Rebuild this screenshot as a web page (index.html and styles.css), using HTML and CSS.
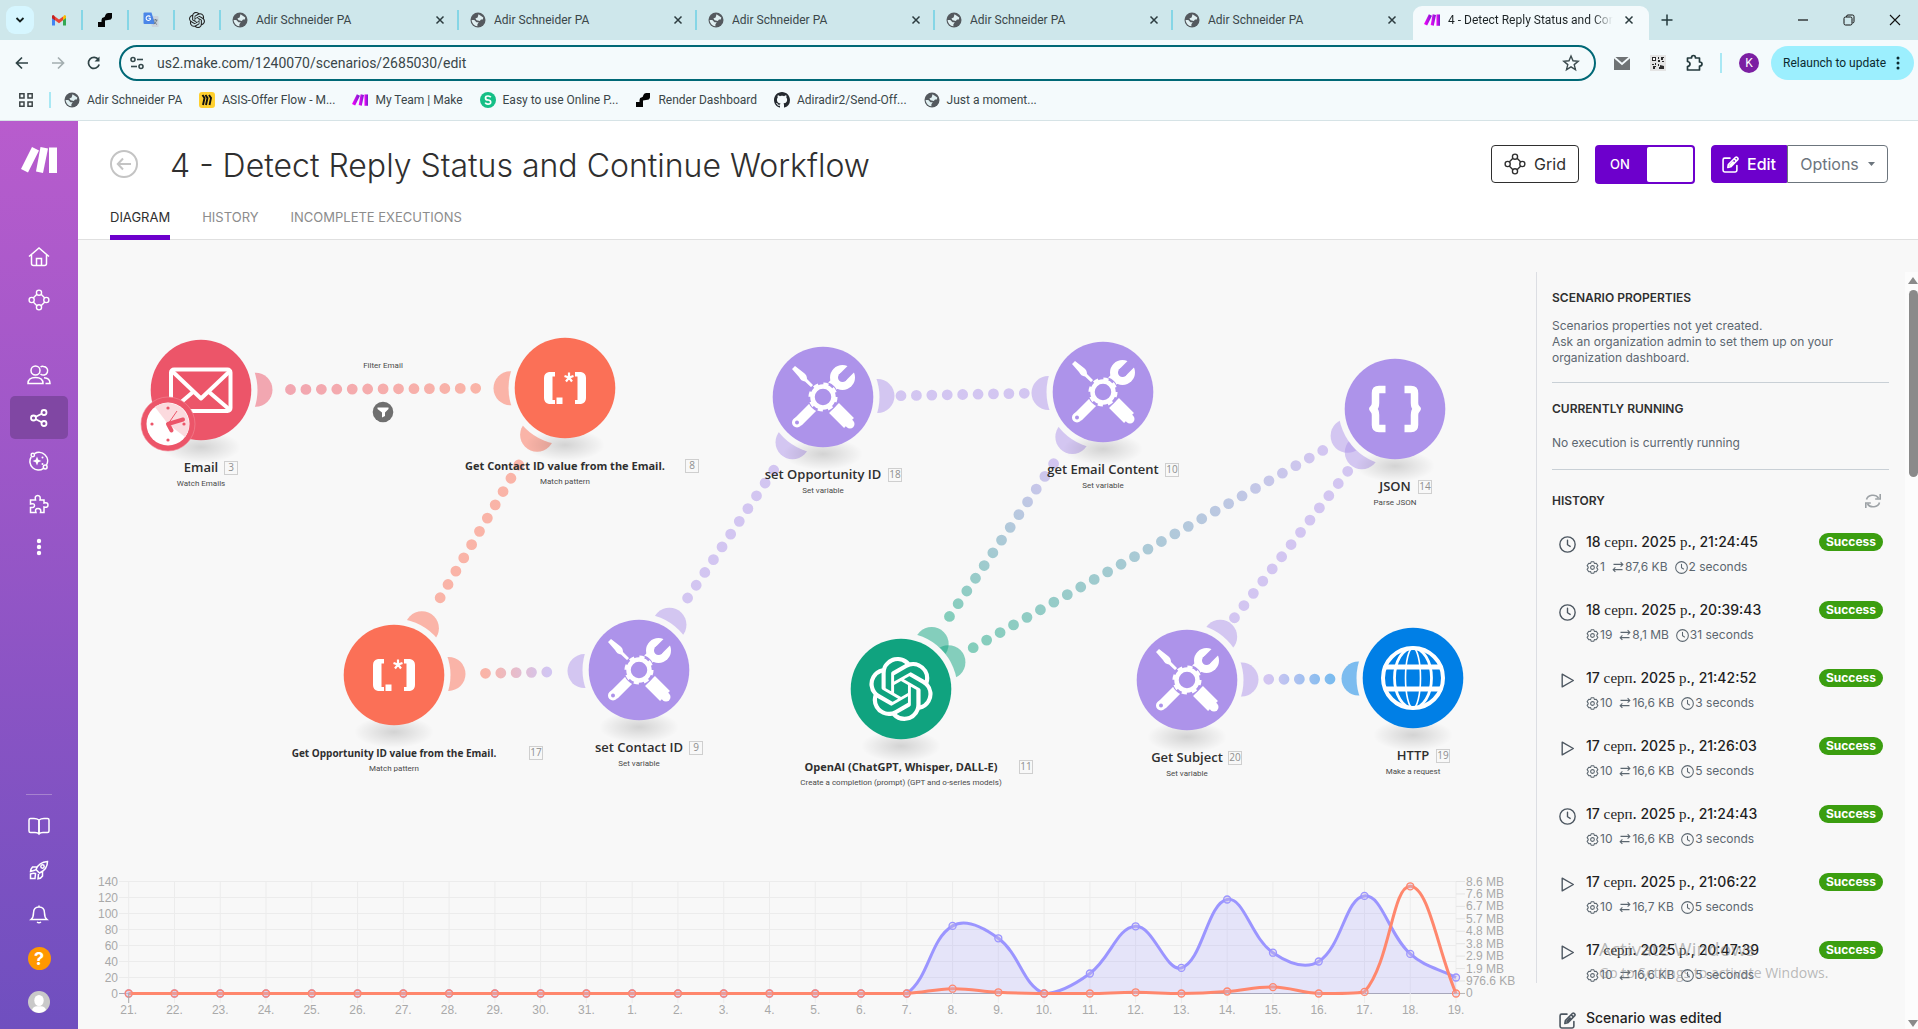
FILE: index.html
```html
<!DOCTYPE html>
<html lang="en">
<head>
<meta charset="utf-8">
<title>4 - Detect Reply Status and Continue Workflow</title>
<link rel="stylesheet" href="styles.css">
</head>
<body>
<svg class="defs" width="0" height="0" aria-hidden="true">
  <defs>
    <symbol id="i-globe" viewBox="0 0 16 16"><circle cx="8" cy="8" r="7.5" fill="#54595e"/><path d="M8.500 2.200 13.300 5.600 12.800 7.400H11L9.800 9 6.600 8.300 5.400 6.500 7.600 5.500Z" fill="#dfeff1"/><path d="M1.600 8H4.300L6.500 10.200H8.800L7.400 12.200V14.200A6.400 6.400 0 0 1 1.600 8Z" fill="#dfeff1"/></symbol>
    <symbol id="i-x" viewBox="0 0 16 16"><path d="m4.500 4.500 7 7m0-7-7 7" stroke="currentColor" stroke-width="1.500" fill="none"/></symbol>
    <symbol id="i-make" viewBox="0 0 36 26"><path d="M11 0 18 3.500 7 25.500 0 22Z"/><path d="M19.500 0 27 1.500 22 26 15 24.500Z"/><path d="M28 0.500H36V26H28Z"/></symbol>
    <symbol id="i-openai" viewBox="0 0 24 24"><path fill="currentColor" d="M22.2819 9.8211a5.9847 5.9847 0 0 0-.5157-4.9108 6.0462 6.0462 0 0 0-6.5098-2.9A6.0651 6.0651 0 0 0 4.9807 4.1818a5.9847 5.9847 0 0 0-3.9977 2.9 6.0462 6.0462 0 0 0 .7427 7.0966 5.98 5.98 0 0 0 .511 4.9107 6.051 6.051 0 0 0 6.5146 2.9001A5.9847 5.9847 0 0 0 13.2599 24a6.0557 6.0557 0 0 0 5.7718-4.2058 5.9894 5.9894 0 0 0 3.9977-2.9001 6.0557 6.0557 0 0 0-.7475-7.0729zm-9.022 12.6081a4.4755 4.4755 0 0 1-2.8764-1.0408l.1419-.0804 4.7783-2.7582a.7948.7948 0 0 0 .3927-.6813v-6.7369l2.02 1.1686a.071.071 0 0 1 .038.052v5.5826a4.504 4.504 0 0 1-4.4945 4.4944zm-9.6607-4.1254a4.4708 4.4708 0 0 1-.5346-3.0137l.142.0852 4.783 2.7582a.7712.7712 0 0 0 .7806 0l5.8428-3.3685v2.3324a.0804.0804 0 0 1-.0332.0615L9.74 19.9502a4.4992 4.4992 0 0 1-6.1408-1.6464zM2.3408 7.8956a4.485 4.485 0 0 1 2.3655-1.9728V11.6a.7664.7664 0 0 0 .3879.6765l5.8144 3.3543-2.0201 1.1685a.0757.0757 0 0 1-.071 0l-4.8303-2.7865A4.504 4.504 0 0 1 2.3408 7.872zm16.5963 3.8558L13.1038 8.364 15.1192 7.2a.0757.0757 0 0 1 .071 0l4.8303 2.7913a4.4944 4.4944 0 0 1-.6765 8.1042v-5.6772a.79.79 0 0 0-.407-.667zm2.0107-3.0231l-.142-.0852-4.7735-2.7818a.7759.7759 0 0 0-.7854 0L9.409 9.2297V6.8974a.0662.0662 0 0 1 .0284-.0615l4.8303-2.7866a4.4992 4.4992 0 0 1 6.6802 4.66zM8.3065 12.863l-2.02-1.1638a.0804.0804 0 0 1-.038-.0567V6.0742a4.4992 4.4992 0 0 1 7.3757-3.4537l-.142.0805L8.704 5.459a.7948.7948 0 0 0-.3927.6813zm1.0976-2.3654l2.602-1.4998 2.6069 1.4998v2.9994l-2.5974 1.4997-2.6067-1.4997Z"/></symbol>
    <symbol id="i-render" viewBox="0 0 16 16"><path fill="#050505" d="M11 1H15V5.500Q14.500 8 11 8L8 8.500V15H1V10H4.500V8Q4.500 5.500 7 5.200 8 5 8.200 3.500 8.700 1 11 1Z"/></symbol>
    <symbol id="i-flow" viewBox="0 0 24 24"><g fill="none" stroke="currentColor" stroke-width="1.500"><circle cx="12" cy="4" r="2.800"/><circle cx="12" cy="20" r="2.800"/><circle cx="4" cy="12" r="2.800"/><circle cx="20" cy="12" r="2.800"/><path d="M9.700 5.700 5.700 9.700M14.300 5.700 18.300 9.700M5.700 14.300 9.700 18.300M18.300 14.300 14.300 18.300"/></g></symbol>
    <symbol id="i-clock" viewBox="0 0 16 16"><g fill="none" stroke="currentColor" stroke-width="1.300" stroke-linecap="round"><circle cx="8" cy="8" r="7.200"/><path d="M8 4V8.200L10.500 9.800"/></g></symbol>
    <symbol id="i-play" viewBox="0 0 16 16"><path d="M3 2 13.500 8 3 14Z" fill="none" stroke="currentColor" stroke-width="1.300" stroke-linejoin="round"/></symbol>
    <symbol id="i-edit" viewBox="0 0 16 16"><g fill="none" stroke="currentColor" stroke-width="1.500" stroke-linejoin="round" stroke-linecap="round"><path d="M7.500 2H2.500Q1 2 1 3.500V13.500Q1 15 2.500 15H12.500Q14 15 14 13.500V9"/><path d="M5.500 10.800 6 8 12.800 1.200Q13.500.7 14.200 1.300L14.900 2Q15.400 2.700 14.800 3.400L8.200 10.200ZM11.500 2.700 13.500 4.600M7.500 8.800 10.500 5.800"/></g></symbol>
    <symbol id="i-gear" viewBox="0 0 16 16"><g fill="none" stroke="currentColor" stroke-width="1.300" stroke-linejoin="round"><path d="M6.300 1H9.700L10.300 3 12.600 2.700 14.600 5.700 13.300 7.500V8.500L14.600 10.300 12.600 13.300 10.300 13 9.700 15H6.300L5.700 13 3.400 13.300 1.400 10.300 2.700 8.500V7.500L1.400 5.700 3.400 2.700 5.700 3Z"/><circle cx="8" cy="8" r="2.300"/></g></symbol>
    <symbol id="i-swap" viewBox="0 0 16 16"><path d="M2 4.500H14.500M11.500 1.500 14.500 4.500 11.500 7.500M14 11.500H1.500M4.500 8.500 1.500 11.500 4.500 14.500" fill="none" stroke="currentColor" stroke-width="1.400"/></symbol>
  </defs>
</svg>

<div class="browser">
  <div class="tabstrip">
    <button class="tab-search" aria-label="Search tabs"><svg width="10" height="10" viewBox="0 0 10 10"><path d="M1.500 3 5 6.500 8.500 3" fill="none" stroke="#14201f" stroke-width="1.800"/></svg></button>
    <button class="pin" aria-label="Gmail"><svg width="16" height="16" viewBox="0 0 16 16"><path d="M1 3.500V13.500H4V7Z" fill="#4285f4"/><path d="M15 3.500V13.500H12V7Z" fill="#34a853"/><path d="M1 3.500 4 5V8.200L1 6Z" fill="#c5221f"/><path d="M4 8.200V4.500L8 7.500 12 4.500V8.200L8 11.200Z" fill="#ea4335"/><path d="M12 4.500 13.500 3Q15 3 15 4.500V6L12 8.200Z" fill="#fbbc04"/><path d="M4 4.500 2.500 3Q1 3 1 4.500V6L4 8.200Z" fill="#c5221f"/></svg></button>
    <button class="pin" aria-label="Render"><svg width="16" height="16"><use href="#i-render"/></svg></button>
    <button class="pin" aria-label="Translate"><svg width="16" height="16" viewBox="0 0 16 16"><path d="M6 4H14.500Q15.500 4 15.500 5V15H9Z" fill="#c9d3dc"/><path d="M1.500.5H8.500L12 12H1.500Q.5 12 .5 11V1.500Q.5.500 1.500.500Z" fill="#4a86e8"/><path d="M7.300 4.800A2.300 2.300 0 1 0 7.300 7.500V6.200H5.500" fill="none" stroke="#fff" stroke-width="1.100"/><path d="M10.500 8H14.500M12.500 7V8M13.800 8Q13 11 10.800 12.200M11.300 9.500Q12 11.500 14 12.500" fill="none" stroke="#6b7780" stroke-width=".9"/></svg></button>
    <button class="pin" aria-label="ChatGPT"><svg width="16" height="16"><use href="#i-openai"/></svg></button>
    <button class="tab"><svg width="16" height="16"><use href="#i-globe"/></svg><span class="tab-title">Adir Schneider PA</span><svg class="tab-x" width="16" height="16"><use href="#i-x"/></svg></button>
    <button class="tab"><svg width="16" height="16"><use href="#i-globe"/></svg><span class="tab-title">Adir Schneider PA</span><svg class="tab-x" width="16" height="16"><use href="#i-x"/></svg></button>
    <button class="tab"><svg width="16" height="16"><use href="#i-globe"/></svg><span class="tab-title">Adir Schneider PA</span><svg class="tab-x" width="16" height="16"><use href="#i-x"/></svg></button>
    <button class="tab"><svg width="16" height="16"><use href="#i-globe"/></svg><span class="tab-title">Adir Schneider PA</span><svg class="tab-x" width="16" height="16"><use href="#i-x"/></svg></button>
    <button class="tab last"><svg width="16" height="16"><use href="#i-globe"/></svg><span class="tab-title">Adir Schneider PA</span><svg class="tab-x" width="16" height="16"><use href="#i-x"/></svg></button>
    <button class="tab active"><svg width="16" height="12" fill="url(#mk)"><defs><linearGradient id="mk"><stop offset="0" stop-color="#ff00ff"/><stop offset="1" stop-color="#6e21c9"/></linearGradient></defs><use href="#i-make"/></svg><span class="tab-title">4 - Detect Reply Status and Continue Workflow</span><svg class="tab-x" width="16" height="16"><use href="#i-x"/></svg></button>
    <button class="tab-new" aria-label="New tab"><svg width="12" height="12" viewBox="0 0 12 12"><path d="M6 .5V11.500M.5 6H11.500" stroke="#243a3d" stroke-width="1.500"/></svg></button>
    <div class="win">
      <button aria-label="Minimize"><svg width="12" height="12" viewBox="0 0 12 12"><path d="M1 6H11" stroke="#111" stroke-width="1.200"/></svg></button>
      <button aria-label="Restore"><svg width="12" height="12" viewBox="0 0 12 12"><path d="M3.500 3V2.500Q3.500 1 5 1H9.500Q11 1 11 2.500V7.500Q11 9 9.500 9" fill="none" stroke="#111"/><rect x="1" y="3" width="8" height="8" rx="1.500" fill="none" stroke="#111"/></svg></button>
      <button aria-label="Close"><svg width="12" height="12" viewBox="0 0 12 12"><path d="m1 1 10 10m0-10-10 10" stroke="#111" stroke-width="1.100"/></svg></button>
    </div>
  </div>
  <div class="toolbar">
    <button class="nav" aria-label="Back"><svg width="16" height="16" viewBox="0 0 16 16"><path d="M14 8H3M8 2.500 2.500 8 8 13.500" fill="none" stroke="#2f4346" stroke-width="1.700"/></svg></button>
    <button class="nav" aria-label="Forward"><svg width="16" height="16" viewBox="0 0 16 16"><path d="M2 8H13M8 2.500 13.500 8 8 13.500" fill="none" stroke="#a3aeb0" stroke-width="1.700"/></svg></button>
    <button class="nav" aria-label="Reload"><svg width="16" height="16" viewBox="0 0 16 16"><path d="M13.200 9.500A5.500 5.500 0 1 1 12.500 4.800" fill="none" stroke="#2f4346" stroke-width="1.700"/><path d="M13.500 1.500V6.500H8.500Z" fill="#2f4346"/></svg></button>
    <label class="omnibox">
      <svg width="16" height="16" viewBox="0 0 16 16"><g fill="none" stroke="#35494c" stroke-width="1.600"><circle cx="4" cy="4.500" r="2"/><path d="M8 4.500H14"/><circle cx="12" cy="11.500" r="2"/><path d="M2 11.500H8"/></g></svg>
      <input type="text" aria-label="Address" value="us2.make.com/1240070/scenarios/2685030/edit">
      <svg width="18" height="18" viewBox="0 0 18 18"><path d="M9 2 11 6.800 16.200 7.200 12.200 10.600 13.500 15.700 9 12.900 4.500 15.700 5.800 10.600 1.800 7.200 7 6.800Z" fill="none" stroke="#3c4b4e" stroke-width="1.400"/></svg>
    </label>
    <div class="ext">
      <button aria-label="Mail extension"><svg width="18" height="18" viewBox="0 0 18 18"><path d="M1 3H17V16H1Z" fill="#6f7375"/><path d="M1 3 9 10 17 3" fill="none" stroke="#f4fafc" stroke-width="1.800"/></svg></button>
      <button aria-label="QR extension"><svg width="16" height="16" viewBox="0 0 16 16"><rect width="16" height="16" fill="#e4e4e4"/><path d="M2 2H6V6H2ZM8 2H9V4H8ZM11 2H14V3H13V5H11ZM8 5H10V7H8ZM12 6H14V7H12ZM2 9H4V10H2ZM5 8H6V10H5ZM3 11H6V12H5V14H3ZM8 9H9V11H8ZM10 10 14 11V14H9V12H10Z" fill="#2b2b2b"/><path d="M3 3H5V5H3Z" fill="#fff"/></svg></button>
      <button aria-label="Extensions"><svg width="18" height="18" viewBox="0 0 18 18"><path d="M2.500 4H6.500Q6.500 1.500 8.500 1.500T10.500 4H14.500V8Q17 8 17 10T14.500 12V16H2.500V12.500Q5 12 5 10T2.500 7.500Z" fill="none" stroke="#243a3d" stroke-width="1.700" stroke-linejoin="round"/></svg></button>
    </div>
    <button class="avatar" aria-label="Profile">K</button>
    <button class="relaunch">Relaunch to update<svg width="4" height="14" viewBox="0 0 4 14"><g fill="#0b2a2f"><circle cx="2" cy="2" r="1.500"/><circle cx="2" cy="7" r="1.500"/><circle cx="2" cy="12" r="1.500"/></g></svg></button>
  </div>
  <nav class="bookmarks" aria-label="Bookmarks">
    <button class="apps" aria-label="Apps"><svg width="16" height="16" viewBox="0 0 16 16"><path d="M1.800 1.800H6V6H1.800ZM10 1.800H14.200V6H10ZM1.800 10H6V14.200H1.800ZM10 10H14.200V14.200H10Z" fill="none" stroke="#3c4446" stroke-width="1.500"/></svg></button>
    <a href="#"><svg width="16" height="16"><use href="#i-globe"/></svg>Adir Schneider PA</a>
    <a href="#"><svg width="16" height="16" viewBox="0 0 16 16"><rect width="16" height="16" rx="3" fill="#ffd02f"/><path d="m3.500 3 2 3-1.500 7M6.500 3l2 3-1.500 7M10 3l2 3-1.500 7" fill="none" stroke="#111" stroke-width="1.900"/></svg>ASIS-Offer Flow - M...</a>
    <a href="#"><svg width="16" height="12" fill="url(#mk)"><use href="#i-make"/></svg>My Team | Make</a>
    <a href="#"><svg width="16" height="16" viewBox="0 0 16 16"><circle cx="8" cy="8" r="8" fill="#15bf86"/><path d="M10.800 5.300Q10 4 8 4 5.500 4 5.500 6T8 8 10.700 10.100 8 12.200Q6 12.200 5.200 10.700" fill="none" stroke="#fff" stroke-width="1.700"/></svg>Easy to use Online P...</a>
    <a href="#"><svg width="16" height="16"><use href="#i-render"/></svg>Render Dashboard</a>
    <a href="#"><svg width="16" height="16" viewBox="0 0 16 16"><path fill="#24292f" d="M8 0C3.580 0 0 3.580 0 8c0 3.540 2.290 6.530 5.470 7.590.4.070.55-.17.55-.38 0-.19-.01-.82-.01-1.490-2.010.37-2.530-.49-2.690-.94-.09-.23-.48-.94-.82-1.130-.28-.15-.68-.52-.01-.53.63-.01 1.080.58 1.230.82.720 1.210 1.870.87 2.330.66.070-.52.28-.87.510-1.070-1.780-.2-3.640-.89-3.640-3.950 0-.87.310-1.590.82-2.150-.08-.2-.36-1.020.08-2.120 0 0 .67-.21 2.200.82.64-.18 1.320-.27 2-.27s1.360.09 2 .27c1.530-1.040 2.200-.82 2.200-.82.44 1.100.16 1.920.08 2.120.51.56.82 1.270.82 2.150 0 3.070-1.870 3.750-3.650 3.950.29.25.54.73.54 1.480 0 1.070-.01 1.930-.01 2.200 0 .21.15.46.55.38A8.010 8.010 0 0 0 16 8c0-4.420-3.580-8-8-8Z"/></svg>Adiradir2/Send-Off...</a>
    <a href="#"><svg width="16" height="16"><use href="#i-globe"/></svg>Just a moment...</a>
  </nav>
</div>

<div class="app">
  <nav class="sidebar" aria-label="Main">
    <a class="logo" href="#" aria-label="Make"><svg width="36" height="26" fill="#fff"><use href="#i-make"/></svg></a>
    <a href="#" aria-label="Home"><svg width="22" height="22" viewBox="0 0 22 22"><path d="M1 10.500 11 2 21 10.500M3.500 9V17.500Q3.500 19.500 5.500 19.500H16.500Q18.500 19.500 18.500 17.500V9M8.500 19V12.500H13.500V19" /></svg></a>
    <a href="#" aria-label="Grid"><svg width="22" height="22"><use href="#i-flow"/></svg></a>
    <a class="spaced" href="#" aria-label="Team"><svg width="24" height="22" viewBox="0 0 24 22"><circle cx="8.500" cy="6.500" r="4.500"/><path d="M1 19.500Q1 13.500 8.500 13.500T16 19.500ZM13.500 3Q15 2 16.500 2.500A4.300 4.300 0 1 1 13.500 10M17 13.800Q23 14 23 19.500H18.500"/></svg></a>
    <a class="current" href="#" aria-label="Scenarios"><svg width="20" height="20" viewBox="0 0 20 20"><g stroke-width="1.800"><circle cx="4.500" cy="10" r="2.500"/><circle cx="15" cy="4.500" r="2.500"/><circle cx="15" cy="15.500" r="2.500"/><path d="M6.800 8.700 12.700 5.700M6.800 11.300 12.700 14.300"/></g></svg></a>
    <a href="#" aria-label="AI agents"><svg width="20" height="20" viewBox="0 0 20 20"><path d="M5.500 2.700A8.500 8.500 0 0 1 17.500 14M14.500 17.300A8.500 8.500 0 0 1 2.200 6"/><circle cx="3.800" cy="4" r="1.700"/><circle cx="16.200" cy="16" r="1.900"/><path fill="#fff" stroke="none" d="M8 5.500 9.300 8.700 12.500 10 9.300 11.300 8 14.500 6.700 11.300 3.500 10 6.700 8.700Z"/><circle cx="13.500" cy="6.500" r="1" fill="#fff" stroke="none"/><circle cx="13.500" cy="13" r="1" fill="#fff" stroke="none"/></svg></a>
    <a href="#" aria-label="Apps"><svg width="20" height="20" viewBox="0 0 20 20"><path d="M1.500 6H6.500Q5.500 1.500 8.700 1.500T11 6H15V9Q19 8 19 11T15 13V18.500H11.500Q12.500 14.500 9 14.500T7 18.500H1.500V13.500Q5.500 14 5.500 11.500T1.500 10Z"/></svg></a>
    <a href="#" aria-label="More"><svg width="6" height="18" viewBox="0 0 6 18"><g fill="#fff" stroke="none"><circle cx="3" cy="3" r="2.200"/><circle cx="3" cy="9" r="2.200"/><circle cx="3" cy="15" r="2.200"/></g></svg></a>
    <div class="side-bottom">
      <a href="#" aria-label="Resources"><svg width="22" height="20" viewBox="0 0 22 20"><path d="M11 4Q9 2.500 6 2.500H2.500Q1 2.500 1 4V15Q1 16.500 2.500 16.500H7Q10 16.500 11 18 12 16.500 15 16.500H19.500Q21 16.500 21 15V4Q21 2.500 19.500 2.500H16Q13 2.500 11 4ZV18"/><path d="M11 4V18"/></svg></a>
      <a href="#" aria-label="What's new"><svg width="20" height="20" viewBox="0 0 20 20"><path d="M7 9.500Q10 2 18.500 1.500 18.500 9.500 10.500 13ZM8 7H3.500Q1.500 9 1.500 11.500L6.500 10M13.500 12V16Q12 18.500 9 18.800L9.500 14M6.500 13.500 6 18.500H1.500V14Q4 13 6.500 13.500Z"/><circle cx="13.500" cy="6.500" r="1.700"/></svg></a>
      <a href="#" aria-label="Notifications"><svg width="20" height="20" viewBox="0 0 20 20"><path d="M10 1.500V3M2 15.500Q4.500 13.500 4.500 9 4.500 3 10 3T15.500 9Q15.500 13.500 18 15.500ZM8 18Q10 19.500 12 18"/></svg></a>
      <a href="#" aria-label="Help"><span class="help">?</span></a>
      <a href="#" aria-label="Account"><svg width="22" height="22" viewBox="0 0 22 22" stroke="none"><circle cx="11" cy="11" r="11" fill="#c9c9c9"/><ellipse cx="11" cy="9.500" rx="4.700" ry="5.500" fill="#fff"/><path d="M4 19Q5 15.500 9 15.200H13Q17 15.500 18 19 15 22 11 22T4 19Z" fill="#fff"/></svg></a>
    </div>
  </nav>

  <main class="main">
    <header class="header">
      <div class="title-row">
        <a class="back" href="#" aria-label="Back"><svg width="28" height="28" viewBox="0 0 28 28"><g fill="none" stroke="#c4c4c4" stroke-width="2"><circle cx="14" cy="14" r="13"/><path d="M21 14H8M13 8.500 7.800 14 13 19.500"/></g></svg></a>
        <h1>4 - Detect Reply Status and Continue Workflow</h1>
        <button class="btn grid-btn"><svg width="22" height="22"><use href="#i-flow"/></svg>Grid</button>
        <label class="toggle"><span>ON</span><input type="checkbox" checked aria-label="Scenario active"></label>
        <div class="group">
          <button class="btn edit-btn"><svg width="17" height="17"><use href="#i-edit"/></svg>Edit</button>
          <button class="btn opt-btn">Options<svg width="7" height="4" viewBox="0 0 7 4"><path d="M0 0H7L3.500 4Z" fill="#6c757d"/></svg></button>
        </div>
      </div>
      <nav class="tabs" aria-label="Scenario">
        <a class="on" href="#">DIAGRAM</a><a href="#">HISTORY</a><a href="#">INCOMPLETE EXECUTIONS</a>
      </nav>
    </header>

    <div class="work">
      <section class="canvas" aria-label="Scenario diagram">
        <svg id="diagram" viewBox="78 240 1458 620">
          <defs>
            <radialGradient id="shade"><stop offset="0" stop-color="#000" stop-opacity=".15"/><stop offset="1" stop-color="#000" stop-opacity="0"/></radialGradient>
            <g id="n-mail" fill="none" stroke="#fff" stroke-width="4" stroke-linejoin="round"><rect x="-30" y="-20.500" width="59.500" height="41.500" rx="3"/><path d="M-29-19 0 8.500 29-19M-29 20-8 2M29 20 8 2"/></g>
            <g id="n-regex" fill="#fff"><path d="M-10-16V-11.500H-12.500V12H-10V16H-16Q-21 15-21 10V-10Q-21-15-16-16Z"/><path d="M10-16V-11.500H12.500V12H10V16H16Q21 15 21 10V-10Q21-15 16-16Z"/><path d="M-8.500 9.500H-2.500V16H-8.500Z"/><path d="M4-15.500V-10.500M-.5-12 4-10.500 8.500-12M1-6.500 4-10.500 7-6.500" fill="none" stroke="#fff" stroke-width="2.200"/></g>
            <g id="n-tools">
              <path fill="#fff" d="M-31-28-28-31-19-24Q-16-22-16-18L-8.500-10.500-10.500-8.500-18-15.500Q-22-16-24-20Z"/>
              <path d="M5-7 15-16" stroke="#fff" stroke-width="11"/><circle cx="19.500" cy="-19.500" r="12.500" fill="#fff"/><path d="M19-19 33-33" stroke="#ad93ea" stroke-width="9"/><circle cx="19.500" cy="-19.500" r="4.500" fill="#ad93ea"/>
              <path d="M-10 10-25 25" stroke="#fff" stroke-width="10"/><circle cx="-26" cy="25.500" r="5" fill="#fff"/><circle cx="-26" cy="25.500" r="2" fill="#ad93ea"/>
              <path d="M11 11 26 26" stroke="#fff" stroke-width="14"/><path d="M24 24 27 27" stroke="#fff" stroke-width="9" stroke-linecap="round"/>
              <circle r="15.500" fill="#ad93ea"/><circle r="10.500" fill="none" stroke="#fff" stroke-width="4.500"/><circle r="12.800" fill="none" stroke="#fff" stroke-width="3.500" stroke-dasharray="5 5.053"/>
            </g>
            <g id="n-json" fill="none" stroke="#fff" stroke-width="7.500" stroke-linejoin="round"><path d="M-9.500-19.500H-16Q-19.500-19.500-19.500-16V-6Q-19.500-2-22 0-19.500 2-19.500 6V16Q-19.500 19.500-16 19.500H-9.500"/><path d="M9.500-19.500H16Q19.500-19.500 19.500-16V-6Q19.500-2 22 0 19.500 2 19.500 6V16Q19.500 19.500 16 19.500H9.500"/></g>
            <g id="n-http" fill="none" stroke="#fff"><circle r="30" stroke-width="4"/><path d="M-29-11H29M-29 11H29" stroke-width="5"/><ellipse rx="18.500" ry="30" stroke-width="2.800"/><ellipse rx="7.500" ry="30" stroke-width="1.600"/></g>
            <g id="n-openai" color="#fff"><use href="#i-openai" x="-32" y="-32" width="64" height="64"/></g>
          </defs>
        </svg>
        <svg id="chart" viewBox="78 860 1458 169"></svg>
      </section>
      <div class="divider"></div>
      <aside class="panel">
        <div class="panel-body">
          <h2>SCENARIO PROPERTIES</h2>
          <p>Scenarios properties not yet created.<br>Ask an organization admin to set them up on your organization dashboard.</p>
          <hr>
          <h2>CURRENTLY RUNNING</h2>
          <p class="idle">No execution is currently running</p>
          <hr class="low">
          <h2 class="hist">HISTORY<button aria-label="Refresh"><svg width="16" height="16" viewBox="0 0 16 16"><g fill="none" stroke="#9da2a6" stroke-width="1.600"><path d="M1.500 6.500A6.500 5.500 0 0 1 13.500 5M15.200 1V6H10.200M14.500 9.500A6.500 5.500 0 0 1 2.500 11M.8 15V10H5.800"/></g></svg></button></h2>
          <ul id="history"></ul>
        </div>
        <div class="scrollbar"><i class="up"></i><i class="thumb"></i><i class="down"></i></div>
      </aside>
    </div>
  </main>
</div>
<div class="watermark"><b>Activate Windows</b><span>Go to Settings to activate Windows.</span></div>
<script src="app.js"></script>
</body>
</html>
```
FILE: styles.css
```css
* { box-sizing: border-box; }
html, body { height: 100%; }
body {
  margin: 0;
  display: flex;
  flex-direction: column;
  overflow: hidden;
  font-family: Inter, "Noto Sans", sans-serif;
  color: #2f2f2f;
  background: #f8f8f8;
}
button, input { font: inherit; color: inherit; border: 0; background: none; padding: 0; margin: 0; }
a { color: inherit; text-decoration: none; }
h1, h2, p, ul { margin: 0; padding: 0; font-weight: 400; }
svg { flex: none; display: block; }
.defs { position: absolute; }

/* Browser window frame */
.browser { flex: none; font-family: Roboto, "Noto Sans", sans-serif; font-size: 12px; color: #3a4649; background: #f4fafc; border-bottom: 1px solid #d6e3e6; }
.tabstrip { display: flex; align-items: center; height: 40px; background: #cee7eb; padding-left: 6px; }
.tab-search { width: 28px; height: 28px; margin-right: 3px; border-radius: 9px; background: #d6f6ff; display: grid; place-items: center; }
.pin { width: 46px; height: 20px; display: grid; place-items: center; border-right: 2px solid #85d6e6; color: #222; }
.tab { flex: 0 1 238px; min-width: 0; height: 20px; display: flex; align-items: center; gap: 8px; padding: 0 9px 0 11px; border-right: 2px solid #85d6e6; text-align: left; }
.tab.last { border-color: transparent; }
.tab-title { flex: 1; overflow: hidden; white-space: nowrap; line-height: 16px; }
.tab-x { color: #2c3c3f; }
.tab.active { flex-basis: 236px; height: 34px; margin-left: 2px; padding: 0 12px 6px 11px; align-self: flex-end; background: #f4fafc; border: 0; border-radius: 9px 9px 0 0; color: #1d2426; }
.tab.active .tab-title { -webkit-mask-image: linear-gradient(90deg, #000 88%, transparent); mask-image: linear-gradient(90deg, #000 88%, transparent); }
.tab-new { padding: 0 12px; }
.win { margin-left: auto; display: flex; }
.win button { width: 46px; height: 40px; display: grid; place-items: center; }
.toolbar { display: flex; align-items: center; height: 46px; padding: 0 4px; }
.nav { width: 36px; height: 36px; display: grid; place-items: center; }
.omnibox { flex: 1; display: flex; align-items: center; gap: 12px; height: 36px; margin-left: 7px; padding: 0 14px 0 8px; border: 2px solid #006876; border-radius: 18px; font-size: 14px; }
.omnibox input { flex: 1; min-width: 0; outline: 0; }
.ext { display: flex; align-items: center; gap: 19px; padding: 0 17px; border-right: 2px solid #a9e8f4; height: 20px; }
.avatar { width: 20px; height: 20px; margin: 0 12px 0 17px; border-radius: 50%; background: #7b1fa2; color: #fff; text-align: center; }
.relaunch { display: flex; align-items: center; gap: 10px; height: 34px; padding: 0 14px 0 12px; border-radius: 17px; background: #9ceffe; color: #0b2a2f; }
.bookmarks { display: flex; align-items: center; height: 34px; padding: 0 0 6px 18px; }
.apps { padding-right: 15px; border-right: 2px solid #a9e8f4; height: 16px; margin-right: 13px; }
.bookmarks a { display: flex; align-items: center; gap: 7px; margin-right: 17px; }

/* App shell */
.app { flex: 1; min-height: 0; display: flex; }
.sidebar { flex: none; width: 78px; display: flex; flex-direction: column; padding-bottom: 5px; background: linear-gradient(#b85ccd, #6f4fbf); }
.sidebar a { display: grid; place-items: center; height: 43px; margin: 0 10px; border-radius: 5px; fill: none; stroke: #fff; stroke-width: 1.500; color: #fff; }
.sidebar .logo { height: 78px; margin-bottom: 36px; stroke: none; }
.sidebar .spaced { margin-top: 32px; }
.sidebar .current { background: #8047a3; }
.side-bottom { margin-top: auto; }
.side-bottom::before { content: ""; display: block; height: 1px; margin: 0 26px 9px; background: #a683cf; }
.side-bottom a { height: 44px; }
.help { width: 23px; height: 23px; border-radius: 50%; background: #ff9800; font-size: 18px; line-height: 23px; font-weight: 700; text-align: center; }
.main { flex: 1; min-width: 0; display: flex; flex-direction: column; }
.header { flex: none; padding: 0 30px 0 32px; background: #fff; border-bottom: 1px solid #e0e0e0; }
.title-row { display: flex; align-items: center; height: 86px; }
.title-row h1 { flex: 1; margin-left: 32px; padding-top: 4px; font-size: 32px; line-height: 40px; font-weight: 300; white-space: nowrap; }
.btn { display: flex; align-items: center; justify-content: center; height: 38px; border: 1px solid #2f2f2f; border-radius: 4px; font-size: 16px; }
.grid-btn { width: 88px; gap: 8px; }
.toggle { width: 100px; height: 39px; margin: 0 16px; display: flex; align-items: center; padding: 2px; border-radius: 4px; background: #6d00cc; color: #fff; font-size: 13px; }
.toggle span { flex: 1; padding-right: 4px; text-align: center; font-weight: 500; }
.toggle input { appearance: none; width: 46px; height: 35px; background: #fff; border-radius: 2px; }
.group { display: flex; }
.edit-btn { width: 76px; gap: 8px; background: #6d00cc; border-color: #6d00cc; color: #fff; border-radius: 4px 0 0 4px; font-weight: 500; }
.opt-btn { width: 101px; gap: 9px; border-color: #6c757d; color: #6c757d; border-radius: 0 4px 4px 0; }
.tabs { display: flex; gap: 32px; margin-bottom: -1px; font-size: 13px; line-height: 20px; color: #8c8c8c; }
.tabs a { padding-bottom: 8px; border-bottom: 5px solid transparent; }
.tabs .on { color: #2f2f2f; border-color: #6d00cc; }

/* Diagram and chart */
.work { flex: 1; min-height: 0; display: flex; }
.canvas { flex: 1; min-width: 0; overflow: hidden; }
.canvas svg { width: 100%; }
.node-title { font: 600 13px "Open Sans", "Noto Sans", sans-serif; fill: #2f2f2f; text-anchor: middle; }
.node-title.long { font-size: 11px; font-weight: 700; }
.node-title.longer { font-size: 10px; font-weight: 700; }
.node-sub { font: 8px Roboto, "Noto Sans", sans-serif; fill: #4a4a4a; text-anchor: middle; }
.node-num { font: 10px "Open Sans", "Noto Sans", sans-serif; fill: #8f8f8f; text-anchor: middle; }
.axis { font: 12px "Liberation Sans", Arial, sans-serif; fill: #a9a9a9; }
.axis.mid { text-anchor: middle; }
.axis.end { text-anchor: end; }

/* Side panel */
.divider { flex: none; width: 1px; margin: 32px 0 46px; background: #dcdee3; }
.panel { flex: none; width: 381px; margin-top: 32px; display: flex; overflow: hidden; }
.panel-body { flex: 1; padding: 18px 16px 0 15px; font-size: 12px; line-height: 16px; }
.panel h2 { font-size: 12px; line-height: 16px; font-weight: 600; }
.panel p { margin-top: 12px; color: #5c6770; }
.panel .idle { margin-top: 18px; }
.panel hr { height: 1px; border: 0; margin: 16px 0 18px; background: #c9d0d6; }
.panel .low { margin: 18px 0 23px; }
.hist { display: flex; justify-content: space-between; padding-right: 8px; }
#history { list-style: none; margin-top: 16px; padding: 0 6px 0 7px; }
#history li { display: grid; grid-template-columns: 18px 1fr auto; grid-template-rows: 20px 20px; column-gap: 9px; row-gap: 5px; padding: 7px 0 16px; line-height: 20px; color: #5c6770; }
#history li > svg { margin-top: 4px; color: #4c5660; }
.when { font-size: 14px; font-weight: 500; color: #1f1f1f; white-space: nowrap; }
.when i { font: 15px "Liberation Serif", serif; line-height: 16px; }
.badge { align-self: start; margin-top: 1px; padding: 0 7px; height: 18px; border-radius: 9px; background: #3b9e10; color: #fff; font-size: 12px; line-height: 18px; font-weight: 700; }
.meta { grid-column: 2 / 4; display: flex; gap: 7px; }
.meta span { display: flex; align-items: center; gap: 1px; }
.scrollbar { flex: none; width: 13px; display: flex; flex-direction: column; align-items: center; background: #fcfcfc; padding: 5px 0 0 3px; }
.up, .down { border: 5px solid transparent; }
.up { border-top: 0; border-bottom: 7px solid #8a8a8a; }
.down { border-bottom: 0; border-top: 7px solid #8a8a8a; margin-top: auto; margin-bottom: 2px; }
.thumb { width: 9px; height: 187px; margin-top: 6px; border-radius: 5px; background: #8a8a8a; }
.watermark { position: absolute; right: 82px; bottom: 46px; width: 237px; display: flex; flex-direction: column; font-family: "Open Sans", "Noto Sans", sans-serif; font-size: 14px; line-height: 20px; color: rgba(130, 130, 130, .55); pointer-events: none; white-space: nowrap; }
.watermark b { font-size: 19px; line-height: 28px; font-weight: 400; }
```
FILE: app.js
```js
const NS = 'http://www.w3.org/2000/svg';
function add(parent, tag, attrs, text) {
  const el = document.createElementNS(NS, tag);
  for (const k in attrs) el.setAttribute(k, attrs[k]);
  if (text !== undefined) el.textContent = text;
  parent.appendChild(el);
  return el;
}

/* Diagram */
const RED = '#ec5569', ORANGE = '#fb7057', PURPLE = '#ad93ea', GREEN = '#10a37f', BLUE = '#007fe6';
const nodes = {
  3: { x: 201, y: 390, c: RED, icon: 'mail', t: 'Email', s: 'Watch Emails', bx: 231 },
  8: { x: 565, y: 388, c: ORANGE, icon: 'regex', t: 'Get Contact ID value from the Email.', s: 'Match pattern', bx: 692, size: ' long' },
  17: { x: 394, y: 675, c: ORANGE, icon: 'regex', t: 'Get Opportunity ID value from the Email.', s: 'Match pattern', bx: 536, size: ' longer' },
  9: { x: 639, y: 670, c: PURPLE, icon: 'tools', t: 'set Contact ID', s: 'Set variable', bx: 696 },
  18: { x: 823, y: 397, c: PURPLE, icon: 'tools', t: 'set Opportunity ID', s: 'Set variable', bx: 895 },
  10: { x: 1103, y: 392, c: PURPLE, icon: 'tools', t: 'get Email Content', s: 'Set variable', bx: 1172 },
  11: { x: 901, y: 689, c: GREEN, icon: 'openai', t: 'OpenAI (ChatGPT, Whisper, DALL-E)', s: 'Create a completion (prompt) (GPT and o-series models)', bx: 1026, size: ' long' },
  14: { x: 1395, y: 409, c: PURPLE, icon: 'json', t: 'JSON', s: 'Parse JSON', bx: 1425 },
  20: { x: 1187, y: 680, c: PURPLE, icon: 'tools', t: 'Get Subject', s: 'Set variable', bx: 1235 },
  19: { x: 1413, y: 678, c: BLUE, icon: 'http', t: 'HTTP', s: 'Make a request', bx: 1443 }
};
/* from, to, first dot, last dot, number of dots */
const links = [
  [3, 8, 290.5, 389.5, 476, 388.3, 13], [8, 17, 518.8, 465, 440, 598, 11],
  [17, 9, 485.5, 673.3, 547.1, 672, 5], [9, 18, 687.6, 598, 773.9, 470, 11],
  [18, 10, 901, 395.7, 1024.6, 393.3, 9], [10, 11, 1053.6, 463.7, 949.3, 616.7, 13],
  [11, 14, 973.2, 647.7, 1323, 450.3, 27], [14, 20, 1347.7, 471.3, 1234.3, 618, 13],
  [20, 19, 1268.7, 679.3, 1330.3, 679, 5]
];
const dia = document.getElementById('diagram');
const defs = dia.querySelector('defs');
links.forEach(([a, b, x1, y1, x2, y2, n], i) => {
  const A = nodes[a], B = nodes[b];
  const g = add(defs, 'linearGradient', { id: 'lk' + i, gradientUnits: 'userSpaceOnUse', x1, y1, x2, y2 });
  add(g, 'stop', { offset: 0, 'stop-color': A.c });
  add(g, 'stop', { offset: 1, 'stop-color': B.c });
  add(dia, 'path', { d: `M${x1} ${y1}L${x2} ${y2}`, pathLength: n - 1 + 0.02, 'stroke-dasharray': '0 1', 'stroke-linecap': 'round', 'stroke-width': 10.8, stroke: `url(#lk${i})`, fill: 'none', opacity: 0.5 });
  const d = Math.hypot(B.x - A.x, B.y - A.y), ux = (B.x - A.x) / d * 54.5, uy = (B.y - A.y) / d * 54.5;
  add(dia, 'circle', { cx: A.x + ux, cy: A.y + uy, r: 17, fill: A.c, opacity: 0.5 });
  add(dia, 'circle', { cx: B.x - ux, cy: B.y - uy, r: 17, fill: B.c, opacity: 0.5 });
});
for (const id in nodes) {
  const n = nodes[id];
  add(dia, 'circle', { cx: n.x, cy: n.y, r: 56.5, fill: '#f8f8f8' });
  add(dia, 'ellipse', { cx: n.x, cy: n.y + 57, rx: 40, ry: 16, fill: 'url(#shade)' });
  add(dia, 'circle', { cx: n.x, cy: n.y, r: 50.3, fill: n.c });
  add(dia, 'use', { href: '#n-' + n.icon, transform: `translate(${n.x} ${n.y})` });
  add(dia, 'text', { x: n.x, y: n.y + 82, class: 'node-title' + (n.size || '') }, n.t);
  add(dia, 'text', { x: n.x, y: n.y + 96, class: 'node-sub' }, n.s);
  add(dia, 'rect', { x: n.bx - 6.5, y: n.y + 71.5, width: 13, height: 13, fill: '#f8f8f8', stroke: '#cfcfcf' });
  add(dia, 'text', { x: n.bx, y: n.y + 81, class: 'node-num' }, id);
}
/* Schedule clock on the trigger */
const clk = add(dia, 'g', { transform: 'translate(168 424)' });
add(clk, 'circle', { r: 27, fill: RED });
add(clk, 'circle', { r: 27, fill: 'none', stroke: '#f18a97', 'stroke-width': 0.6 });
add(clk, 'circle', { r: 21.5, fill: '#fff' });
add(clk, 'path', { d: 'M0 0-13-17A21.500 21.500 0 0 1 17 13Z', fill: '#fbdade' });
add(clk, 'path', { d: 'M0 0 3.500 6.500M0 0 15-4.500', stroke: RED, 'stroke-width': 4, 'stroke-linecap': 'round' });
add(clk, 'path', { d: 'M0 0 9-13', stroke: RED, 'stroke-width': 1 });
[[0, -16], [16, 0], [0, 16], [-16, 0]].forEach(([cx, cy]) => add(clk, 'circle', { cx, cy, r: 1.6, fill: RED }));
/* Filter marker */
add(dia, 'text', { x: 383, y: 368, class: 'node-sub' }, 'Filter Email');
add(dia, 'circle', { cx: 383, cy: 412, r: 10.3, fill: '#6f6f6f' });
add(dia, 'path', { d: 'M377.500 407.500H388.500V409L385 412.500V416L382 417.500V412.500L377.500 409Z', fill: '#fff' });

/* Chart */
const ch = document.getElementById('chart');
const labels = [];
for (let i = 21; i < 32; i++) labels.push(i);
for (let i = 1; i < 20; i++) labels.push(i);
const zeros = Array(18).fill(0);
const ops = [...zeros, 84.5, 69, 0, 25, 84, 32, 117.5, 51, 40, 122, 49.5, 20];
const data = [...zeros, 6, 1.5, 0, 0, 1.5, 0, 2.5, 8, 0, 2, 134, 0];
const X = i => 128.7 + i * 45.77, Y = v => 993.5 - v * 0.8;
for (let i = 0; i < 8; i++) {
  const y = Y(i * 20);
  add(ch, 'path', { d: `M119 ${y}H1456`, stroke: i ? '#ececec' : '#a9a9b4', 'stroke-width': 1 });
  add(ch, 'text', { x: 118, y: y + 4, class: 'axis end' }, i * 20);
}
labels.forEach((l, i) => {
  add(ch, 'path', { d: `M${X(i)} 881V1003`, stroke: '#ececec', 'stroke-width': 1 });
  add(ch, 'text', { x: X(i), y: 1014, class: 'axis mid' }, l + '.');
});
['8.6 MB', '7.6 MB', '6.7 MB', '5.7 MB', '4.8 MB', '3.8 MB', '2.9 MB', '1.9 MB', '976.6 KB', '0'].forEach((t, i) => {
  const y = 881.5 + i * 12.44;
  add(ch, 'path', { d: `M1456 ${y}H1465`, stroke: i === 9 ? '#b5b5b5' : '#e4e4e4' });
  add(ch, 'text', { x: 1466, y: y + 4, class: 'axis' }, t);
});
function curve(vals) {
  const p = vals.map((v, i) => [X(i), Y(v)]), clampY = y => Math.min(993.5, Math.max(881.5, y));
  const cp = p.map((c, i) => {
    const a = p[i - 1] || c, b = p[i + 1] || c;
    const d1 = Math.hypot(c[0] - a[0], c[1] - a[1]), d2 = Math.hypot(b[0] - c[0], b[1] - c[1]);
    const f1 = 0.4 * d1 / (d1 + d2), f2 = 0.4 * d2 / (d1 + d2);
    return [c[0] - f1 * (b[0] - a[0]), clampY(c[1] - f1 * (b[1] - a[1])), c[0] + f2 * (b[0] - a[0]), clampY(c[1] + f2 * (b[1] - a[1]))];
  });
  let d = `M${p[0]}`;
  for (let i = 1; i < p.length; i++) d += `C${cp[i - 1][2]} ${cp[i - 1][3]} ${cp[i][0]} ${cp[i][1]} ${p[i]}`;
  return d;
}
[[ops, '#9b95ff', 'rgba(155,149,255,.2)'], [data, '#ff876d', 'none']].forEach(([vals, color, fill]) => {
  const d = curve(vals);
  if (fill !== 'none') add(ch, 'path', { d: d + `V993.500H128.700Z`, fill });
  add(ch, 'path', { d, fill: 'none', stroke: color, 'stroke-width': 3 });
  vals.forEach((v, i) => add(ch, 'circle', { cx: X(i), cy: Y(v), r: 3.5, fill: 'rgba(200,190,230,.35)', stroke: color, 'stroke-width': 1.3 }));
});
add(ch, 'path', { d: 'M128.700 993V1003', stroke: '#a9a9a9' });

/* History list */
const ico = (n, s) => `<svg width="${s}" height="${s}"><use href="#i-${n}"/></svg>`;
const runs = [
  ['clock', 18, '21:24:45', '1', '87,6 KB', '2'], ['clock', 18, '20:39:43', '19', '8,1 MB', '31'],
  ['play', 17, '21:42:52', '10', '16,6 KB', '3'], ['play', 17, '21:26:03', '10', '16,6 KB', '5'],
  ['clock', 17, '21:24:43', '10', '16,6 KB', '3'], ['play', 17, '21:06:22', '10', '16,7 KB', '5'],
  ['play', 17, '20:47:39', '10', '16,6 KB', '5']
];
document.getElementById('history').innerHTML = runs.map(([i, day, time, o, size, sec]) =>
  `<li>${ico(i, 17)}<span class="when">${day} <i>серп</i>. 2025 <i>р</i>., ${time}</span><span class="badge">Success</span>
  <span class="meta"><span>${ico('gear', 13)}${o}</span><span>${ico('swap', 12)}${size}</span><span>${ico('clock', 13)}${sec} seconds</span></span></li>`
).join('') + `<li>${ico('edit', 17)}<span class="when">Scenario was edited</span></li>`;
```
